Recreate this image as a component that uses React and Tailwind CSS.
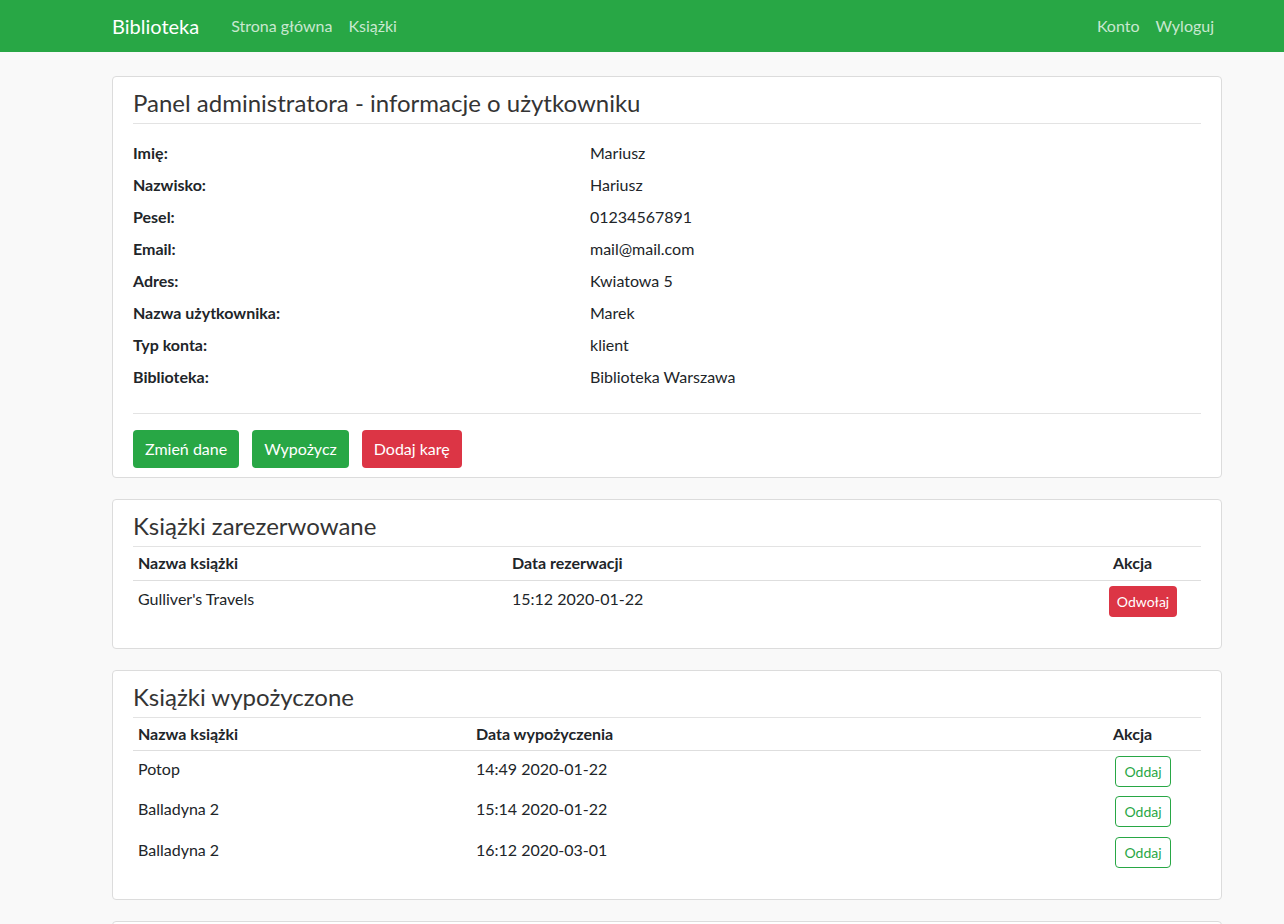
const user = [
  ['Imię:', 'Mariusz'],
  ['Nazwisko:', 'Hariusz'],
  ['Pesel:', '01234567891'],
  ['Email:', 'mail@mail.com'],
  ['Adres:', 'Kwiatowa 5'],
  ['Nazwa użytkownika:', 'Marek'],
  ['Typ konta:', 'klient'],
  ['Biblioteka:', 'Biblioteka Warszawa'],
];

const reserved = [{ title: "Gulliver's Travels", date: '15:12 2020-01-22' }];

const borrowed = [
  { title: 'Potop', date: '14:49 2020-01-22' },
  { title: 'Balladyna 2', date: '15:14 2020-01-22' },
  { title: 'Balladyna 2', date: '16:12 2020-03-01' },
];

function Card({ title, children }) {
  return (
    <div className="bg-white border border-[#dcdcdc] rounded-[4px] px-5">
      <h3 className="text-[24px] leading-[29px] text-[#343434] pt-[11px] pb-[6px] border-b border-[#e3e3e3]">
        {title}
      </h3>
      {children}
    </div>
  );
}

function BookTable({ dateLabel, rows, dateCol, action }) {
  return (
    <table className="w-full table-fixed text-[16px] text-[#212529] mb-[27px]">
      <colgroup>
        <col style={{ width: dateCol }} />
        <col />
        <col className="w-[93px]" />
      </colgroup>
      <thead>
        <tr className="border-b border-[#dedede] h-[33px]">
          <th className="text-left font-bold px-[5px] align-middle">Nazwa książki</th>
          <th className="text-left font-bold px-[5px] align-middle">{dateLabel}</th>
          <th className="text-left font-bold px-[5px] align-middle">Akcja</th>
        </tr>
      </thead>
      <tbody>
        {rows.map((r, i) => (
          <tr key={i} className="h-[40.5px]">
            <td className="px-[5px] pt-[6px] align-top leading-6">{r.title}</td>
            <td className="px-[5px] pt-[6px] align-top leading-6">{r.date}</td>
            <td className="pt-[5px] align-top">
              <div className="w-[70px] flex justify-center">{action}</div>
            </td>
          </tr>
        ))}
      </tbody>
    </table>
  );
}

export default function App() {
  return (
    <div className="min-h-screen bg-[#f9f9f9] font-['Lato','Noto_Sans',sans-serif] text-[#212529]">
      <nav className="bg-[#28a745] h-[52px]">
        <div className="ml-[112px] w-[1110px] h-full flex items-center">
          <span className="text-white text-[20px] mr-6">Biblioteka</span>
          <a className="text-white/75 text-[16px] px-2">Strona główna</a>
          <a className="text-white/75 text-[16px] px-2">Książki</a>
          <div className="ml-auto flex">
            <a className="text-white/75 text-[16px] px-2">Konto</a>
            <a className="text-white/75 text-[16px] px-2">Wyloguj</a>
          </div>
        </div>
      </nav>

      <div className="ml-[112px] w-[1110px] pt-6 flex flex-col gap-[21px]">
        <Card title="Panel administratora - informacje o użytkowniku">
          <div className="pt-[13px] pb-5 border-b border-[#e3e3e3]">
            {user.map(([k, v]) => (
              <div key={k} className="flex h-8 items-center text-[16px]">
                <span className="w-[457px] font-bold">{k}</span>
                <span>{v}</span>
              </div>
            ))}
          </div>
          <div className="flex gap-[13px] pt-4 pb-[9px]">
            <button className="h-[38px] px-3 rounded-[4px] bg-[#28a745] text-white text-[16px]">Zmień dane</button>
            <button className="h-[38px] px-3 rounded-[4px] bg-[#28a745] text-white text-[16px]">Wypożycz</button>
            <button className="h-[38px] px-3 rounded-[4px] bg-[#dc3545] text-white text-[16px]">Dodaj karę</button>
          </div>
        </Card>

        <Card title="Książki zarezerwowane">
          <BookTable
            dateLabel="Data rezerwacji"
            rows={reserved}
            dateCol="374px"
            action={
              <button className="h-[31px] px-2 rounded-[4px] bg-[#dc3545] text-white text-[14px]">Odwołaj</button>
            }
          />
        </Card>

        <Card title="Książki wypożyczone">
          <BookTable
            dateLabel="Data wypożyczenia"
            rows={borrowed}
            dateCol="338px"
            action={
              <button className="h-[31px] px-2 rounded-[4px] border border-[#28a745] text-[#28a745] text-[14px]">Oddaj</button>
            }
          />
        </Card>

        <div className="bg-white border border-[#dcdcdc] rounded-[4px] h-40" />
      </div>
    </div>
  );
}
